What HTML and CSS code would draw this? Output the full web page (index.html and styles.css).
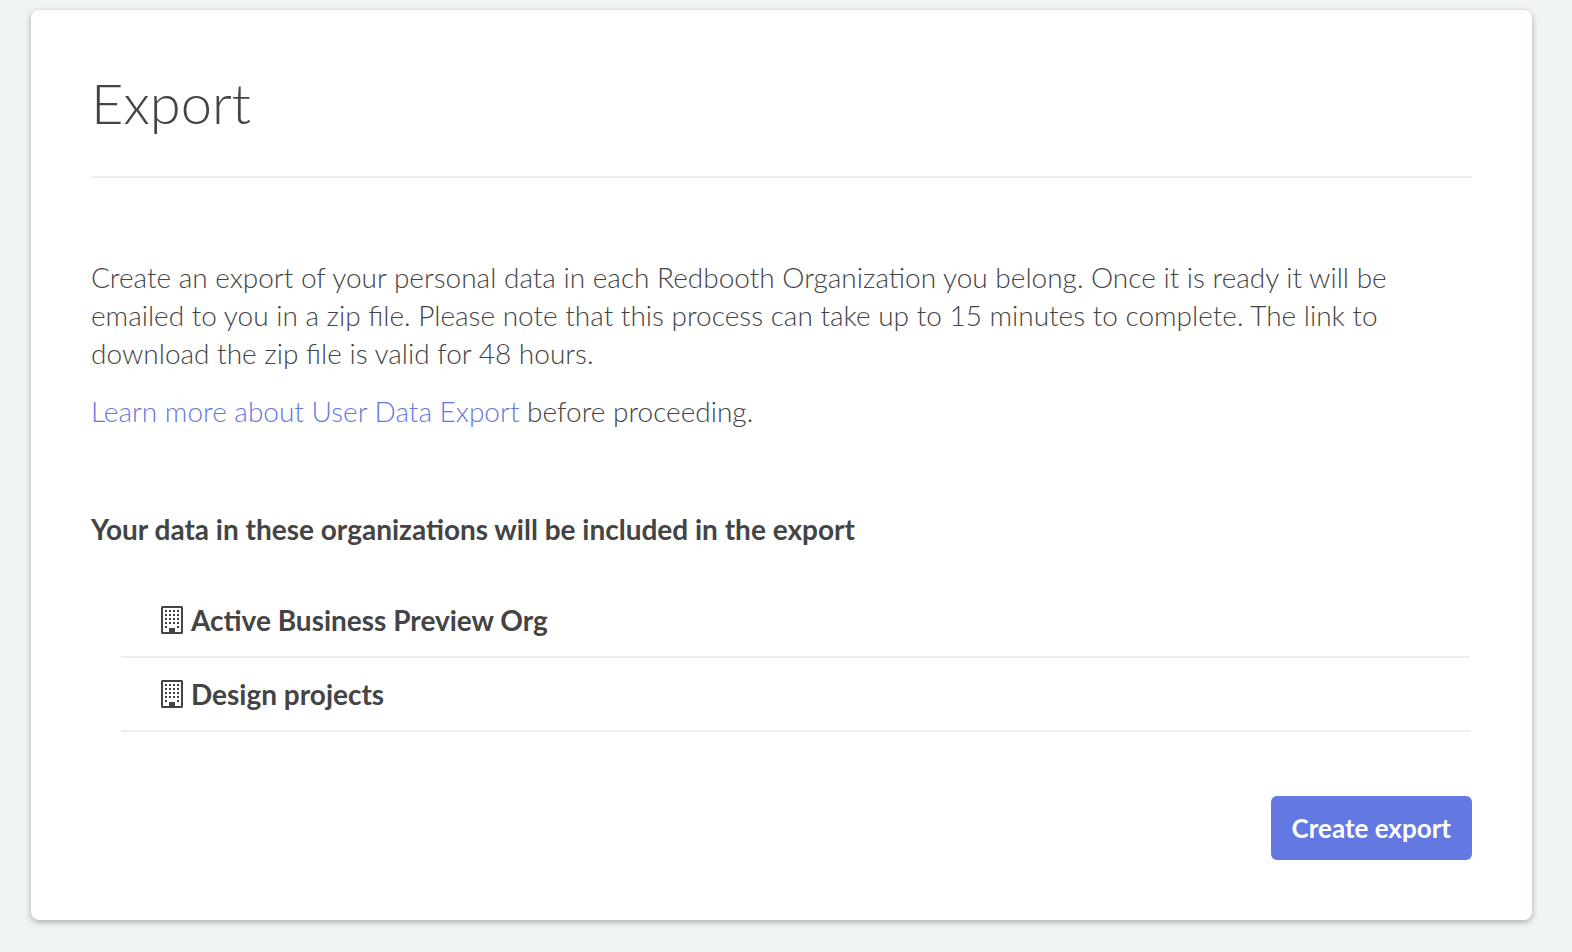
FILE: index.html
```html
<!DOCTYPE html>
<html lang="en">
<head>
<meta charset="utf-8">
<title>Export</title>
<link rel="stylesheet" href="styles.css">
</head>
<body>
<svg class="sprite" aria-hidden="true">
  <symbol id="building" viewBox="0 0 22 28">
    <rect x="1" y="1" width="20" height="26" rx="0.5" fill="none" stroke="currentColor" stroke-width="2"/>
    <path stroke="currentColor" stroke-width="2" stroke-dasharray="2 2" d="M4 5H18M4 9H18M4 13H18M4 17H18"/>
    <path fill="currentColor" d="M4 20h2v2H4zM16 20h2v2h-2zM8 22h6v5H8z"/>
  </symbol>
</svg>
<main class="card">
  <h1 class="title">Export</h1>
  <div class="intro">
    <p class="text">Create an export of your personal data in each Redbooth Organization you belong. Once it is ready it will be emailed to you in a zip file. Please note that this process can take up to 15 minutes to complete. The link to download the zip file is valid for 48 hours.</p>
    <p class="text"><a class="link" href="#learn">Learn more about User Data Export</a> before proceeding.</p>
  </div>
  <h2 class="subtitle">Your data in these organizations will be included in the export</h2>
  <ul class="orgs">
    <li class="org"><svg class="icon" aria-hidden="true"><use href="#building"/></svg>Active Business Preview Org</li>
    <li class="org"><svg class="icon" aria-hidden="true"><use href="#building"/></svg>Design projects</li>
  </ul>
  <div class="actions"><button class="button" type="button">Create export</button></div>
</main>
</body>
</html>
```
FILE: styles.css
```css
* { box-sizing: border-box; }
body {
  margin: 0;
  padding: 10px 40px 32px 31px;
  background: #f0f4f5;
  color: #444;
  font-family: Lato, sans-serif;
  font-size: 28px;
  line-height: 38px;
}
.sprite { display: none; }
.card {
  padding: 60px;
  border-radius: 8px;
  background: #fff;
  box-shadow: 0 2px 6px rgba(0, 0, 0, 0.3);
}
.title {
  margin: 0;
  padding-bottom: 40px;
  border-bottom: 2px solid #eee;
  font-size: 56px;
  line-height: 66px;
  font-weight: 300;
}
.intro { margin-top: 80px; }
.text { margin: 0 0 20px; font-weight: 300; }
.link { color: #6478e2; text-decoration: none; }
.subtitle { margin: 80px 0 36px; font-size: 28px; font-weight: 700; }
.orgs { margin: 0 2px 64px 30px; padding: 0; list-style: none; }
.org {
  display: flex;
  align-items: center;
  gap: 8px;
  padding: 18px 0 18px 40px;
  border-bottom: 2px solid #eee;
  font-weight: 700;
  line-height: 36px;
}
.icon { width: 22px; height: 28px; }
.actions { display: flex; justify-content: flex-end; }
.button {
  padding: 13px 21px;
  border: 0;
  border-radius: 6px;
  background: #6478e2;
  color: #fff;
  font: 700 26px/38px Lato, sans-serif;
}
```
